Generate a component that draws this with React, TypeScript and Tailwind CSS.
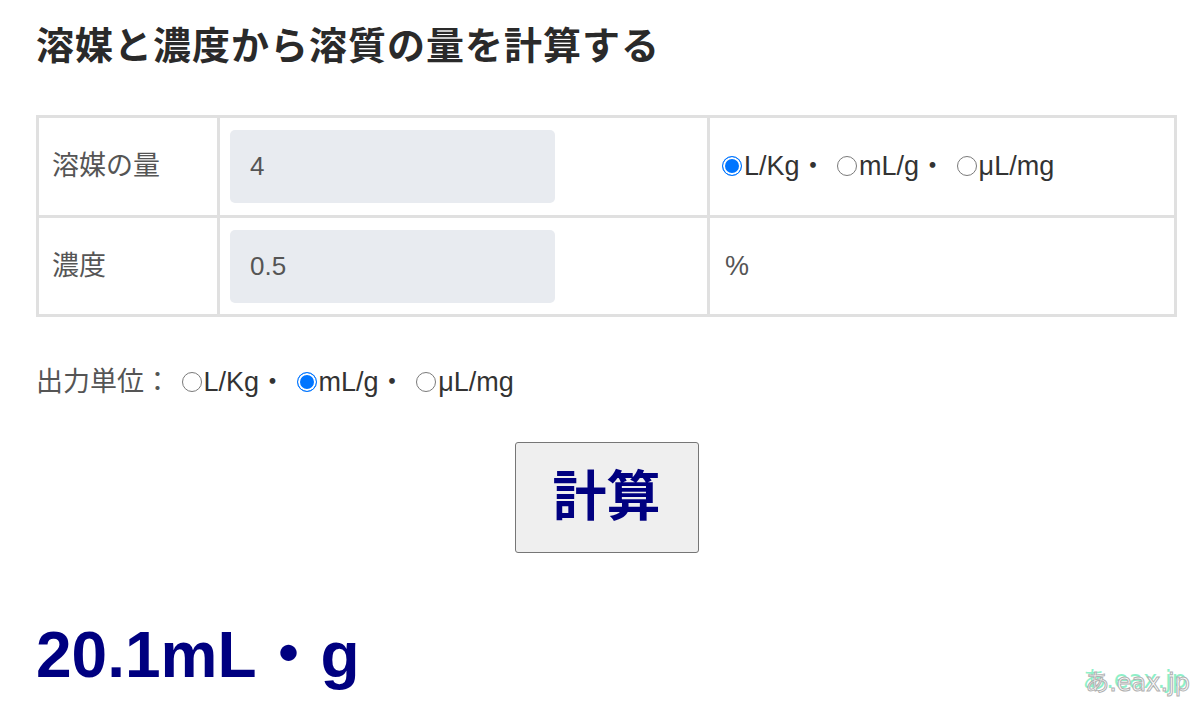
import React from "react";

const font = { fontFamily: '"Liberation Sans", Arial, "Noto Sans CJK JP", sans-serif' };

function Radio({ checked }: { checked?: boolean }) {
  return checked ? (
    <span className="ml-[3px] mr-[2px] inline-block h-[20px] w-[20px] rounded-full border-[1.5px] border-[#0075ff] bg-[#0075ff] align-[-1px] shadow-[inset_0_0_0_2px_#ffffff]" />
  ) : (
    <span className="ml-[3px] mr-[2px] inline-block h-[20px] w-[20px] rounded-full border-[1.5px] border-[#7a7a7a] bg-white align-[-1px]" />
  );
}

function UnitChoices({ selected }: { selected: number }) {
  const units = ["L/Kg", "mL/g", "μL/mg"];
  return (
    <span className="text-[#333]">
      {units.map((u, i) => (
        <React.Fragment key={u}>
          <label className="inline">
            <Radio checked={i === selected} />
            {u}
          </label>
          {i < units.length - 1 ? "・ " : ""}
        </React.Fragment>
      ))}
    </span>
  );
}

export default function App() {
  return (
    <div className="relative h-[703px] w-[1200px] overflow-hidden bg-white" style={font}>
      <div className="ml-[36px] w-[1141px]">
        <h1 className="pt-[24px] text-[38px] font-bold leading-none tracking-[1px] text-[#2a2a2a]" style={{ fontFamily: '"Noto Sans CJK JP", sans-serif' }}>
          溶媒と濃度から溶質の量を計算する
        </h1>

        <div className="mt-[53px] grid grid-cols-[178px_487px_464px] grid-rows-[97px_96px] gap-[3px] bg-[#e0e0e0] p-[3px] text-[27px] text-[#555]">
          <div className="flex items-center bg-white pl-[13px]">溶媒の量</div>
          <div className="flex items-center bg-white pl-[10px]">
            <input
              type="text"
              defaultValue="4"
              className="h-[73px] w-[325px] rounded-[5px] bg-[#e8ebf0] pl-[20px] text-[26px] text-[#555] outline-none"
              style={font}
            />
          </div>
          <div className="flex items-center bg-white pl-[9px]">
            <UnitChoices selected={0} />
          </div>

          <div className="flex items-center bg-white pl-[13px]">濃度</div>
          <div className="flex items-center bg-white pl-[10px]">
            <input
              type="text"
              defaultValue="0.5"
              className="h-[73px] w-[325px] rounded-[5px] bg-[#e8ebf0] pl-[20px] text-[26px] text-[#555] outline-none"
              style={font}
            />
          </div>
          <div className="flex items-center bg-white pl-[15px]">%</div>
        </div>

        <div className="mt-[46px] text-[27px] leading-[39px] text-[#555]">
          出力単位： <UnitChoices selected={1} />
        </div>

        <div className="mt-[40px] flex justify-center">
          <button
            className="h-[111px] w-[184px] rounded-[3px] border-[1.5px] border-[#767676] bg-[#efefef] text-[54px] font-bold text-[#000080]"
            style={{ fontFamily: '"Liberation Sans", "Noto Sans CJK JP", sans-serif' }}
          >
            計算
          </button>
        </div>

        <div className="mt-[70px] text-[64px] font-bold leading-none text-[#000080]">
          20.1mL・g
        </div>
      </div>

      <div
        className="absolute bottom-[8px] right-[10px] text-[24px] leading-none text-white [-webkit-text-stroke:1px_#b0b0b0] [text-shadow:-3px_-3px_0_#8ff0c8]"
        style={{ fontFamily: '"DejaVu Sans", "Noto Sans CJK JP", sans-serif' }}
      >
        あ.eax.jp
      </div>
    </div>
  );
}
